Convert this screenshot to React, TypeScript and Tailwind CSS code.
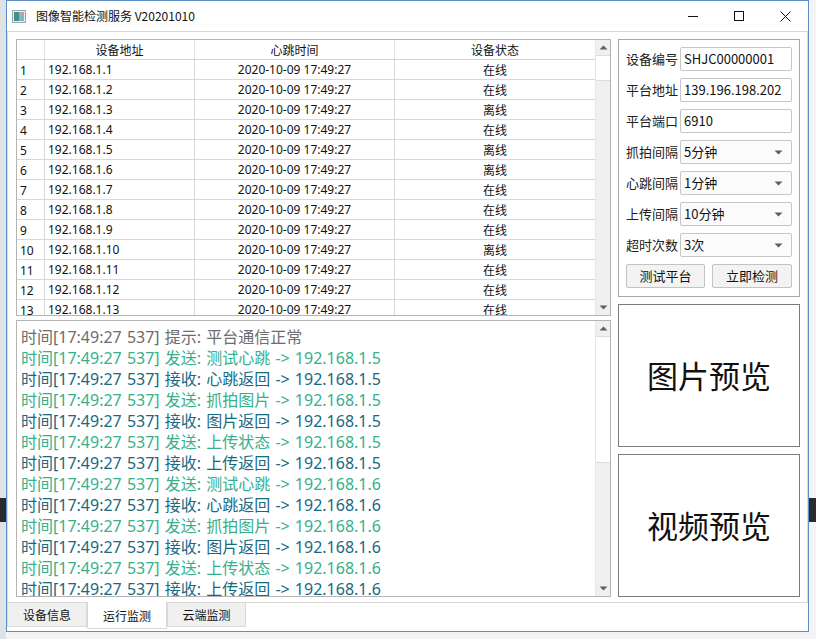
import React from "react";

const FONT = { fontFamily: "'Noto Sans', 'Noto Sans CJK SC', sans-serif" };
const CJK = { fontFamily: "'Noto Sans CJK SC', 'Noto Sans', sans-serif" };

const statuses = ["在线", "在线", "离线", "在线", "离线", "离线", "在线", "在线", "在线", "离线", "在线", "在线", "在线"];

const logs: { t: string; c: string }[] = [
  { t: "提示: 平台通信正常", c: "gray" },
  { t: "发送: 测试心跳 -> 192.168.1.5", c: "send" },
  { t: "接收: 心跳返回 -> 192.168.1.5", c: "recv" },
  { t: "发送: 抓拍图片 -> 192.168.1.5", c: "send" },
  { t: "接收: 图片返回 -> 192.168.1.5", c: "recv" },
  { t: "发送: 上传状态 -> 192.168.1.5", c: "send" },
  { t: "接收: 上传返回 -> 192.168.1.5", c: "recv" },
  { t: "发送: 测试心跳 -> 192.168.1.6", c: "send" },
  { t: "接收: 心跳返回 -> 192.168.1.6", c: "recv" },
  { t: "发送: 抓拍图片 -> 192.168.1.6", c: "send" },
  { t: "接收: 图片返回 -> 192.168.1.6", c: "recv" },
  { t: "发送: 上传状态 -> 192.168.1.6", c: "send" },
  { t: "接收: 上传返回 -> 192.168.1.6", c: "recv" },
];

function UpArrow() {
  return (
    <svg width="9" height="5" viewBox="0 0 9 5">
      <path d="M0.5 4.5 L4.5 0.5 L8.5 4.5 Z" fill="#606060" />
    </svg>
  );
}
function DownArrow() {
  return (
    <svg width="9" height="5" viewBox="0 0 9 5">
      <path d="M0.5 0.5 L4.5 4.5 L8.5 0.5 Z" fill="#606060" />
    </svg>
  );
}

function ScrollBar({ thumbTop, thumbH }: { thumbTop: number; thumbH: number }) {
  return (
    <div className="w-[15px] h-full flex flex-col bg-[#f0f0f0] border-l border-[#e6e6e6]">
      <div className="h-[15px] flex items-center justify-center bg-[#f0f0f0]">
        <UpArrow />
      </div>
      <div className="flex-1 flex flex-col">
        <div style={{ height: thumbTop }} />
        <div style={{ height: thumbH }} className="bg-white border-y border-[#dcdcdc]" />
      </div>
      <div className="h-[15px] flex items-center justify-center bg-[#f0f0f0]">
        <DownArrow />
      </div>
    </div>
  );
}

function Field({ label, value, combo }: { label: string; value: string; combo?: boolean }) {
  return (
    <div className="flex items-center h-[24px]">
      <div className="w-[54px] text-[13px] text-[#202020]" style={CJK}>
        {label}
      </div>
      <div
        className={`w-[112px] h-[24px] border border-[#c6c6c6] rounded-[2px] flex items-center pl-[3px] pr-[8px] text-[13px] text-[#111] ${combo ? "bg-[#fbfbfb]" : "bg-white"}`}
        style={FONT}
      >
        <span className="flex-1" style={CJK}>{value}</span>
        {combo && <DownArrow />}
      </div>
    </div>
  );
}

export default function App() {
  return (
    <div className="w-[816px] h-[639px] bg-[#f3f4f5] flex overflow-hidden" style={FONT}>
      <div className="w-[6px] h-full flex flex-col bg-[#dfe3e6]">
        <div className="h-[498px]" />
        <div className="h-[24px] bg-[#2b2b2b]" />
      </div>
      <div className="flex flex-col">
        <div className="w-[803px] h-[632px] border border-[#5d8fc4] bg-white flex flex-col">
          {/* title bar */}
          <div className="h-[30px] flex items-center bg-white">
            <svg width="14" height="13" viewBox="0 0 14 13" className="ml-[5px] mr-[10px]">
              <rect x="0.5" y="0.5" width="13" height="12" fill="#e8eef0" stroke="#9aa7ad" />
              <rect x="2" y="2" width="5" height="9" fill="#3f8f8a" />
              <rect x="7" y="2" width="5" height="4" fill="#c0a0a8" />
              <rect x="7" y="6" width="5" height="5" fill="#7fb7c9" />
            </svg>
            <span className="text-[12px] text-[#111]" style={CJK}>
              图像智能检测服务 V20201010
            </span>
            <div className="flex-1" />
            <div className="w-[46px] h-[30px] flex items-center justify-center">
              <div className="w-[10px] h-px bg-[#111]" />
            </div>
            <div className="w-[46px] h-[30px] flex items-center justify-center">
              <div className="w-[10px] h-[10px] border border-[#111]" />
            </div>
            <div className="w-[46px] h-[30px] flex items-center justify-center">
              <svg width="11" height="11" viewBox="0 0 11 11">
                <path d="M0.5 0.5 L10.5 10.5 M10.5 0.5 L0.5 10.5" stroke="#111" strokeWidth="1" />
              </svg>
            </div>
          </div>

          {/* tab pane */}
          <div className="h-[572px] w-[801px] border border-[#d9d9d9] bg-white flex pt-[7px] pl-[8px] pr-[6px] gap-[7px]">
            {/* left column */}
            <div className="w-[595px] flex flex-col gap-[4px]">
              {/* table */}
              <div className="h-[277px] border border-[#b4b4b4] flex overflow-hidden">
                <div className="w-[578px] flex flex-col overflow-hidden">
                  <div className="h-[20px] shrink-0 flex border-b border-[#d4d4d4] text-[12px] text-[#111]" style={CJK}>
                    <div className="w-[28px] border-r border-[#e3e3e3]" />
                    <div className="w-[150px] border-r border-[#e3e3e3] flex items-center justify-center">设备地址</div>
                    <div className="w-[200px] border-r border-[#e3e3e3] flex items-center justify-center">心跳时间</div>
                    <div className="w-[200px] flex items-center justify-center">设备状态</div>
                  </div>
                  {statuses.map((s, i) => (
                    <div key={i} className="h-[20px] shrink-0 flex border-b border-[#d8d8d8] text-[12px] text-[#111]">
                      <div className="w-[28px] border-r border-[#d8d8d8] flex items-center pl-[3px] pt-[2px]">{i + 1}</div>
                      <div className="w-[150px] border-r border-[#d8d8d8] flex items-center pl-[3px]">192.168.1.{i + 1}</div>
                      <div className="w-[200px] border-r border-[#d8d8d8] flex items-center justify-center">2020-10-09 17:49:27</div>
                      <div className="w-[200px] flex items-center justify-center" style={CJK}>{s}</div>
                    </div>
                  ))}
                </div>
                <ScrollBar thumbTop={0} thumbH={26} />
              </div>
              {/* log */}
              <div className="h-[277px] border border-[#b4b4b4] flex overflow-hidden">
                <div className="w-[578px] pl-[4px] pt-[6px] flex flex-col overflow-hidden">
                  {logs.map((l, i) => (
                    <div
                      key={i}
                      className={`h-[21px] shrink-0 leading-[21px] text-[16px] whitespace-nowrap ${
                        l.c === "gray" ? "text-[#6d6d6d]" : l.c === "send" ? "text-[#36b08d]" : "text-[#19697f]"
                      }`}
                      style={{ fontFamily: "'Noto Sans', 'Noto Sans CJK SC', sans-serif", wordSpacing: "1px" }}
                    >
                      时间[17:49:27 537] {l.t}
                    </div>
                  ))}
                </div>
                <ScrollBar thumbTop={0} thumbH={127} />
              </div>
            </div>

            {/* right column */}
            <div className="w-[182px] flex flex-col">
              <div className="h-[258px] border border-[#a8a8a8] flex flex-col pl-[7px] pt-[7px] gap-[7px]">
                <Field label="设备编号" value="SHJC00000001" />
                <Field label="平台地址" value="139.196.198.202" />
                <Field label="平台端口" value="6910" />
                <Field label="抓拍间隔" value="5分钟" combo />
                <Field label="心跳间隔" value="1分钟" combo />
                <Field label="上传间隔" value="10分钟" combo />
                <Field label="超时次数" value="3次" combo />
                <div className="flex gap-[7px] h-[24px]">
                  <div className="w-[79px] h-[24px] border border-[#c3c3c3] rounded-[2px] bg-[#f3f3f3] flex items-center justify-center text-[13px] text-[#111]" style={CJK}>
                    测试平台
                  </div>
                  <div className="w-[80px] h-[24px] border border-[#c3c3c3] rounded-[2px] bg-[#f3f3f3] flex items-center justify-center text-[13px] text-[#111]" style={CJK}>
                    立即检测
                  </div>
                </div>
              </div>
              <div className="mt-[7px] h-[143px] border border-[#7c7c7c] flex items-center justify-center text-[31px] text-[#111]" style={CJK}>
                图片预览
              </div>
              <div className="mt-[7px] h-[143px] border border-[#7c7c7c] flex items-center justify-center text-[31px] text-[#111]" style={CJK}>
                视频预览
              </div>
            </div>
          </div>

          {/* tabs */}
          <div className="flex-1 flex bg-white">
            <div className="w-[80px] h-[25px] -mt-px bg-[#f0f0f0] border border-[#d9d9d9] flex items-center justify-center text-[12px] text-[#111]" style={CJK}>
              设备信息
            </div>
            <div className="w-[80px] h-[27px] -mt-px bg-white border border-t-0 border-[#d9d9d9] flex items-center justify-center text-[12px] text-[#111] pt-[2px]" style={CJK}>
              运行监测
            </div>
            <div className="w-[79px] h-[25px] -mt-px bg-[#f0f0f0] border border-[#d9d9d9] flex items-center justify-center text-[12px] text-[#111]" style={CJK}>
              云端监测
            </div>
          </div>
        </div>
      </div>
      <div className="flex-1 h-full flex flex-col bg-[#f3f4f5]">
        <div className="h-[498px]" />
        <div className="h-[24px] bg-[#2b2b2b]" />
      </div>
    </div>
  );
}
